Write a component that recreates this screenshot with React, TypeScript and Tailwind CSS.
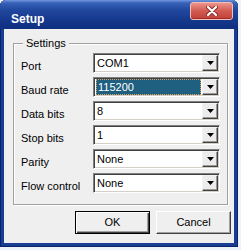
import React from "react";

const rows: { label: string; value: string; selected?: boolean }[] = [
  { label: "Port", value: "COM1" },
  { label: "Baud rate", value: "115200", selected: true },
  { label: "Data bits", value: "8" },
  { label: "Stop bits", value: "1" },
  { label: "Parity", value: "None" },
  { label: "Flow control", value: "None" },
];

const Combo = ({ value, selected }: { value: string; selected?: boolean }) => (
  <div className="flex h-[20px] w-[127px] border border-t-[#808080] border-l-[#808080] border-b-white border-r-white bg-white shadow-[inset_1px_1px_0_#404040,inset_-1px_-1px_0_#d4d0c8] p-[1px]">
    <div className="flex flex-1 items-center pl-[1px]">
      {selected ? (
        <span className="flex h-[16px] flex-1 items-center border border-dotted border-[#e0a060] bg-[#1f5f80] pl-[1px] text-white">
          {value}
        </span>
      ) : (
        <span className="pl-[1px] text-black">{value}</span>
      )}
    </div>
    <div className="ml-[1px] flex w-[16px] items-center justify-center border border-t-[#f4f4f4] border-l-[#f4f4f4] border-b-[#404040] border-r-[#404040] bg-[#ececec] shadow-[inset_-1px_-1px_0_#9a9a9a]">
      <svg width="7" height="4" viewBox="0 0 7 4">
        <path d="M0 0h7L3.5 4z" fill="#000" />
      </svg>
    </div>
  </div>
);

export default function App() {
  return (
    <div
      className="h-[250px] w-[241px] bg-[#eef2fa] text-[11px]"
      style={{ fontFamily: '"Liberation Sans", Arial, sans-serif' }}
    >
      <div className="flex h-[247px] w-[238px] flex-col rounded-t-[6px] bg-[#1a3d94] shadow-[inset_1px_0_0_#0a2266,inset_-1px_0_0_#0a2266,inset_0_-1px_0_#0a2266]">
        <div className="flex h-[29px] items-start rounded-t-[6px] bg-[linear-gradient(to_bottom,#7396dc_0px,#3761b8_3px,#21479e_10px,#15388c_20px,#0f2f80_29px)] pl-[11px] pr-[5px]">
          <span className="mt-[10px] text-[12px] font-bold text-white">Setup</span>
          <div className="ml-auto mt-[2px] flex h-[18px] w-[43px] items-center justify-center rounded-[3px] border border-[#f2c0b8] bg-[linear-gradient(to_bottom,#ec948a,#d25a50_50%,#c0403a)] shadow-[inset_0_-1px_0_#a02a28]">
            <svg width="12" height="10" viewBox="0 0 12 10">
              <path d="M2 1l8 8M10 1l-8 8" stroke="#8a2a28" strokeWidth="4" strokeLinecap="round" />
              <path d="M2 1l8 8M10 1l-8 8" stroke="#fff" strokeWidth="2.2" strokeLinecap="round" />
            </svg>
          </div>
        </div>
        <div className="mx-[4px] mb-[4px] flex flex-1 flex-col bg-[#efefef]">
          <div className="relative ml-[9px] mt-[14px] h-[162px] w-[215px] border border-[#a0a0a0] shadow-[inset_1px_1px_0_#fff,1px_1px_0_#fff] pl-[7px] pt-[9px]">
            <span className="absolute left-[9px] top-[-8px] bg-[#efefef] px-[3px] leading-[14px] text-black">
              Settings
            </span>
            <div className="flex flex-col gap-[4px]">
              {rows.map((r) => (
                <div key={r.label} className="flex h-[20px]">
                  <span className="w-[72px] pt-[7px] leading-[13px] text-black">{r.label}</span>
                  <Combo value={r.value} selected={r.selected} />
                </div>
              ))}
            </div>
          </div>
          <div className="mt-[6px] flex justify-end gap-[6px] pr-[3px]">
            <button className="flex h-[23px] w-[75px] items-center justify-center border border-black bg-[#efefef] text-black shadow-[inset_1px_1px_0_#fff,inset_-1px_-1px_0_#404040,inset_-2px_-2px_0_#a0a0a0]">
              OK
            </button>
            <button className="flex h-[23px] w-[75px] items-center justify-center border border-t-white border-l-white border-b-[#404040] border-r-[#404040] bg-[#efefef] text-black shadow-[inset_-1px_-1px_0_#a0a0a0]">
              Cancel
            </button>
          </div>
        </div>
      </div>
    </div>
  );
}
